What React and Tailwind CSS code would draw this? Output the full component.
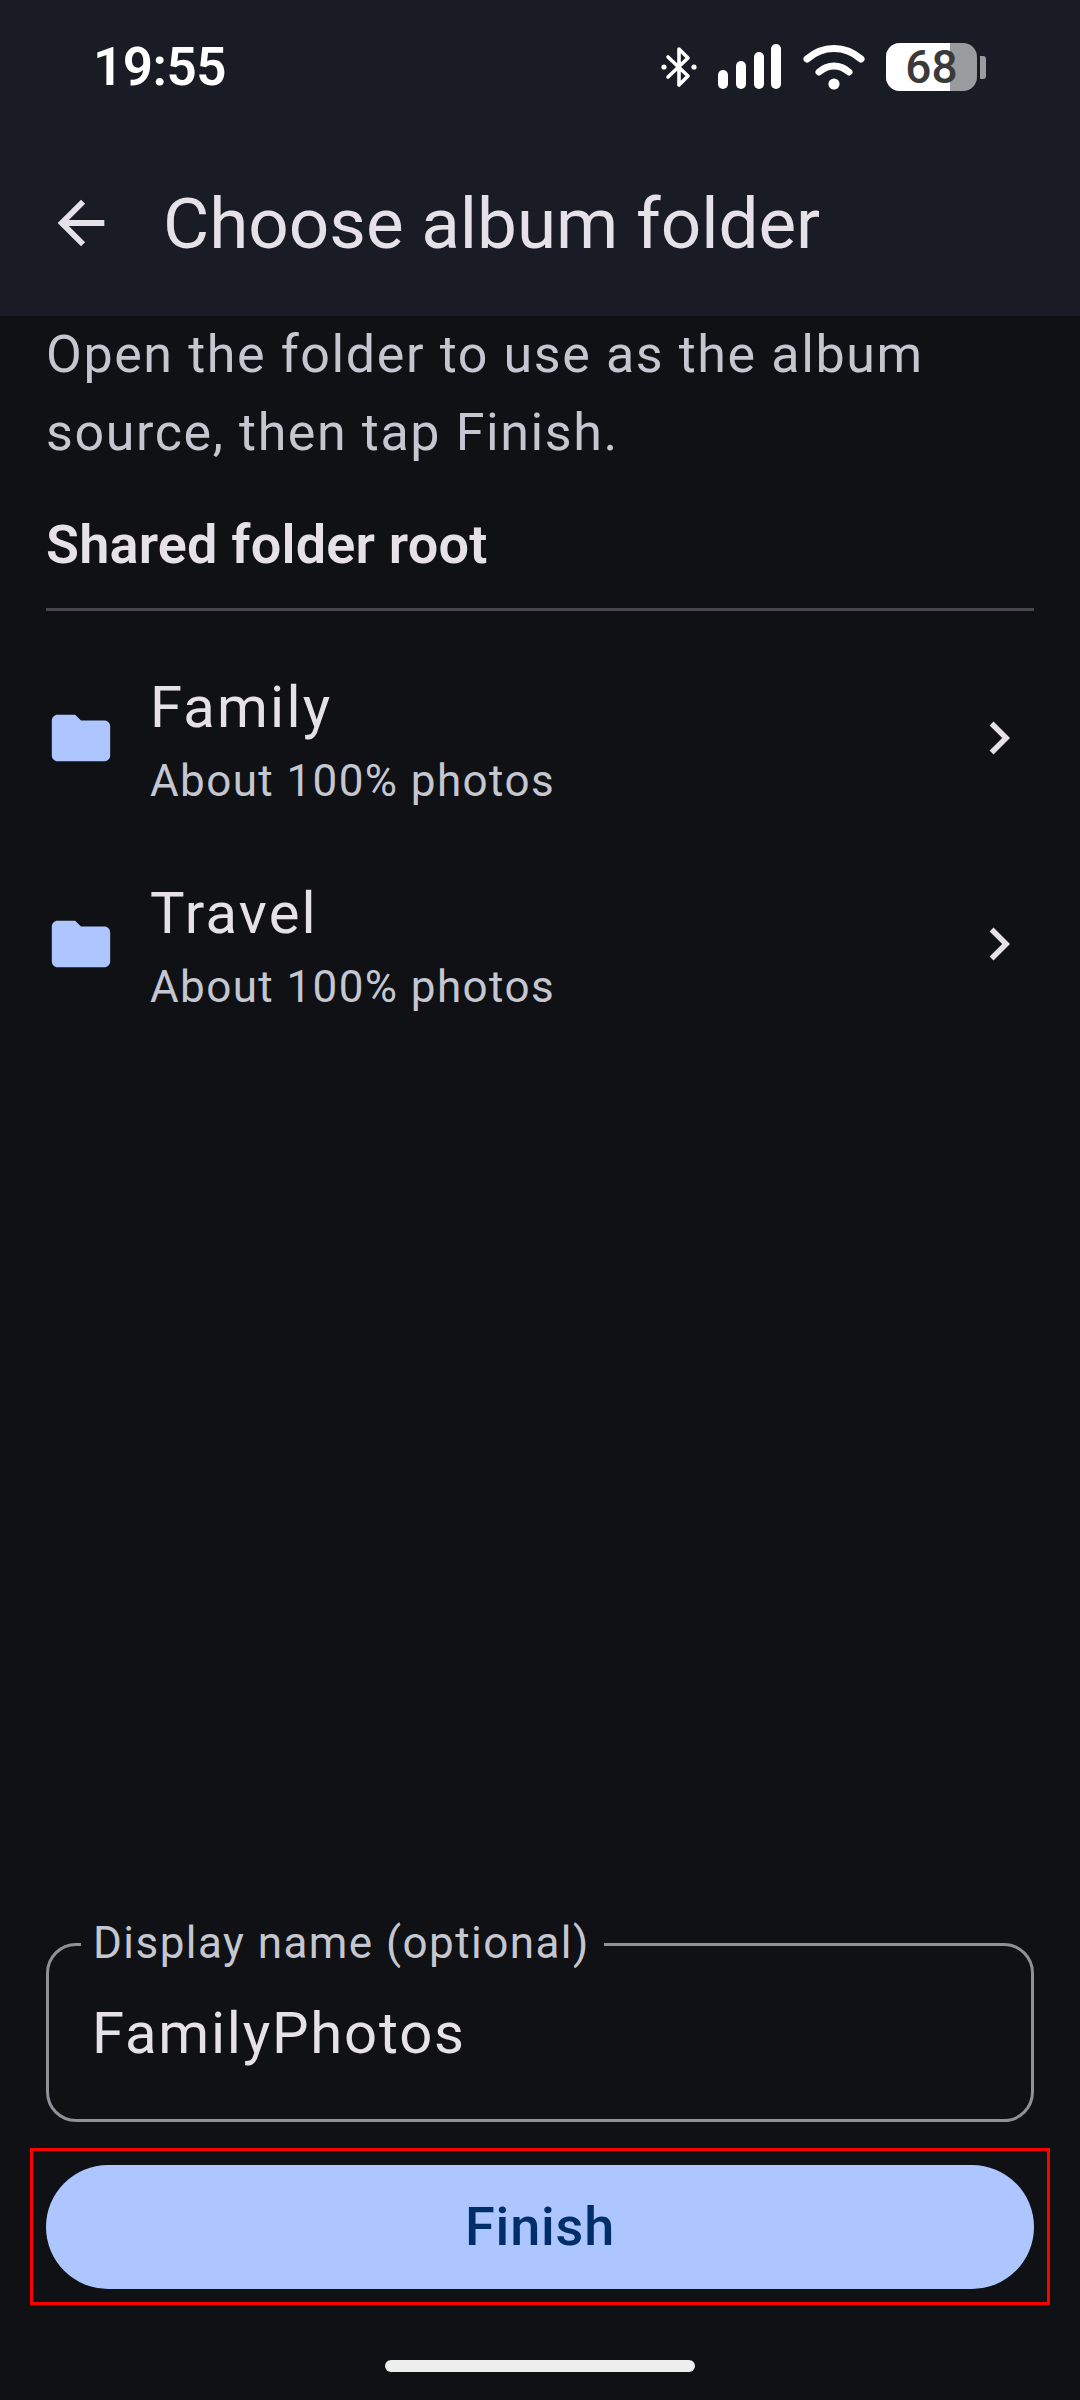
const folders = ['Family', 'Travel'];

function StatusIcons() {
  return (
    <div className="flex items-center">
      <svg width="36" height="42" viewBox="0 0 36 42" fill="none" className="mr-[21px]">
        <path d="M7 11 L27 30 L18 39 V3 L27 12 L7 31" stroke="white" strokeWidth="3.6" strokeLinejoin="round" strokeLinecap="round" />
        <circle cx="3" cy="21" r="2.6" fill="white" />
        <circle cx="33" cy="21" r="2.6" fill="white" />
      </svg>
      <svg width="64" height="46" viewBox="0 0 64 46" fill="white" className="mr-[21px]">
        <rect x="0" y="26" width="10" height="19" rx="5" />
        <rect x="18" y="17" width="10" height="28" rx="5" />
        <rect x="36" y="8" width="10" height="37" rx="5" />
        <rect x="53" y="0" width="10" height="45" rx="5" />
      </svg>
      <svg width="62" height="46" viewBox="0 0 62 46" fill="none" className="mr-[21px]">
        <path d="M4 15 C20 1 42 1 58 15" stroke="white" strokeWidth="7" strokeLinecap="round" />
        <path d="M16 28 C25 20 37 20 46 28" stroke="white" strokeWidth="7" strokeLinecap="round" />
        <circle cx="31" cy="40" r="5.6" fill="white" />
      </svg>
      <div className="relative flex h-[48px] w-[91px] items-center justify-center rounded-[14px] bg-[#9a9b9f]">
        <div className="absolute inset-y-0 left-0 w-[64px] rounded-l-[14px] bg-white" />
        <span className="relative text-[46px] font-medium leading-none text-[#3a3a3c]">68</span>
      </div>
      <div className="ml-[3px] h-[23px] w-[6px] rounded-r-[3px] bg-[#9a9b9f]" />
    </div>
  );
}

function FolderRow({ name }) {
  return (
    <div className="flex h-[206px] items-center">
      <svg width="70" height="70" viewBox="0 0 24 24" fill="#adc6ff" className="shrink-0">
        <path d="M10 4H4c-1.1 0-2 .9-2 2v12c0 1.1.9 2 2 2h16c1.1 0 2-.9 2-2V8c0-1.1-.9-2-2-2h-8l-2-2z" />
      </svg>
      <div className="ml-[34px] flex-1 pt-[14px]">
        <div className="text-[58px] leading-[72px] tracking-[2.2px] text-[#e6e0e9]">{name}</div>
        <div className="text-[44px] leading-[76px] tracking-[1.4px] text-[#c4c6d0]">About 100% photos</div>
      </div>
      <svg width="66" height="66" viewBox="0 0 24 24" fill="#e6e0e9" className="mr-[2px] shrink-0">
        <path d="M10 6L8.59 7.41 13.17 12l-4.58 4.59L10 18l6-6z" />
      </svg>
    </div>
  );
}

export default function App() {
  return (
    <div className="flex h-[2400px] w-[1080px] flex-col overflow-hidden bg-[#0f1115] font-['Roboto',sans-serif]">
      <header className="h-[316px] shrink-0 bg-[#191c24]">
        <div className="flex h-[132px] items-center justify-between pl-[93px] pr-[94px] pt-[2px]">
          <span className="text-[53px] font-semibold leading-none tracking-[-0.5px] text-white">19:55</span>
          <StatusIcons />
        </div>
        <div className="flex h-[184px] items-center pb-[2px] pl-[46px]">
          <svg width="70" height="70" viewBox="0 0 24 24" fill="#e6e0e9" className="shrink-0">
            <path d="M20 11H7.83l5.59-5.59L12 4l-8 8 8 8 1.41-1.41L7.83 13H20v-2z" />
          </svg>
          <h1 className="ml-[47px] text-[71px] font-normal leading-none text-[#e6e0e9]">Choose album folder</h1>
        </div>
      </header>

      <main className="flex flex-1 flex-col px-[46px]">
        <p className="text-[52px] leading-[78px] tracking-[1.6px] text-[#c4c6d0]">
          Open the folder to use as the album
          <br />
          source, then tap Finish.
        </p>
        <h2 className="mt-[37px] text-[54px] font-semibold leading-[72px] tracking-[0.2px] text-[#e6e0e9]">Shared folder root</h2>
        <div className="mt-[27px] h-[3px] bg-[#49454f]" />
        <div className="mt-[24px]">
          {folders.map((f) => (
            <FolderRow key={f} name={f} />
          ))}
        </div>

        <div className="relative mt-auto h-[179px] rounded-[30px] border-[3px] border-[#938f99] px-[43px] pt-[51px]">
          <span className="absolute left-[32px] top-[-33px] bg-[#0f1115] pl-[12px] pr-[14px] text-[44px] leading-[60px] tracking-[1.45px] text-[#c4c6d0]">
            Display name (optional)
          </span>
          <div className="text-[58px] leading-[72px] tracking-[1.8px] text-[#e6e0e9]">FamilyPhotos</div>
        </div>

        <div className="mx-[-16px] mt-[26px] border-[3px] border-[#ff0000] px-[13px] pb-[13px] pt-[14px]">
          <button className="flex h-[124px] w-full items-center justify-center rounded-full bg-[#adc6ff] pb-[2px] text-[54px] font-medium tracking-[0.8px] text-[#002e69]">
            Finish
          </button>
        </div>

        <div className="mx-auto mb-[28px] mt-[55px] h-[12px] w-[310px] rounded-full bg-[#eeeeee]" />
      </main>
    </div>
  );
}
